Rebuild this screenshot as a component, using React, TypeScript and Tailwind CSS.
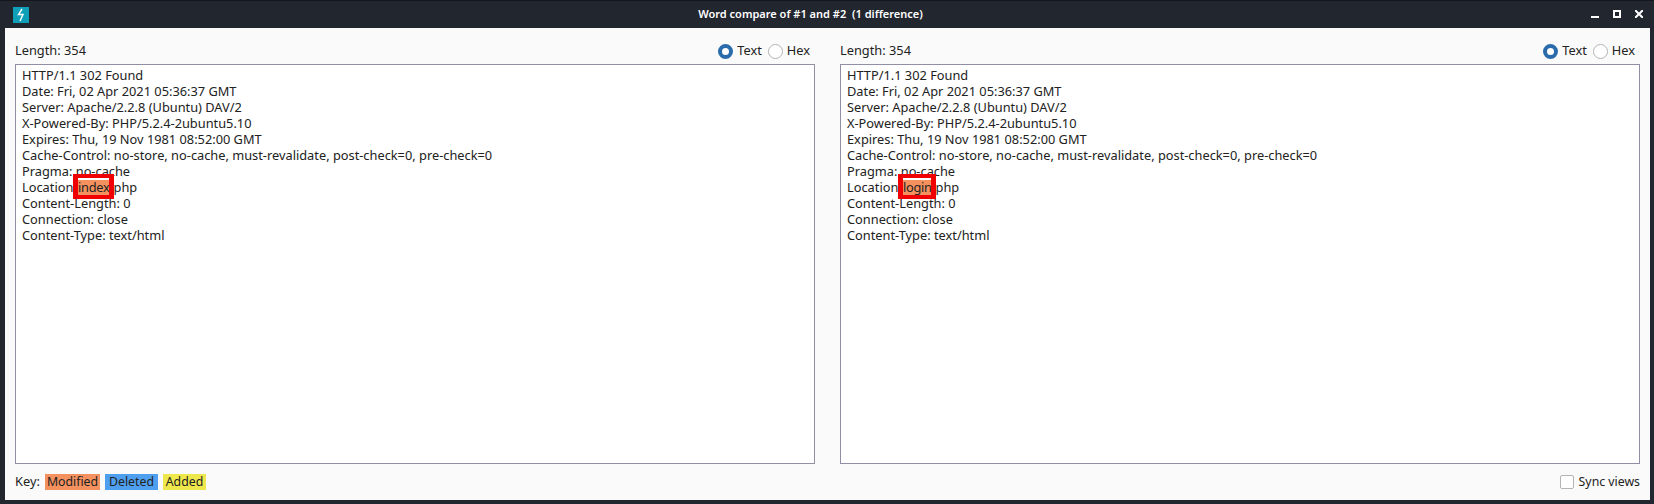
const lines = (word: string, width: string) => [
  "HTTP/1.1 302 Found",
  "Date: Fri, 02 Apr 2021 05:36:37 GMT",
  "Server: Apache/2.2.8 (Ubuntu) DAV/2",
  "X-Powered-By: PHP/5.2.4-2ubuntu5.10",
  "Expires: Thu, 19 Nov 1981 08:52:00 GMT",
  "Cache-Control: no-store, no-cache, must-revalidate, post-check=0, pre-check=0",
  "Pragma: no-cache",
  <>
    Location:{" "}
    <span className={`relative -ml-[2px] mt-[1px] inline-block h-[15px] bg-[#f4915f] align-top leading-[14px] tracking-[-0.3px] ${width}`}>
      {word}
      <span className="absolute -left-[5px] -right-[5px] -top-[6px] -bottom-[4px] border-x-[5px] border-y-[4px] border-[#f00000]" />
    </span>
    <span className="ml-[1px]">.php</span>
  </>,
  "Content-Length: 0",
  "Connection: close",
  "Content-Type: text/html",
];

function Radio({ label, checked }: { label: string; checked?: boolean }) {
  return (
    <div className="flex items-center gap-[4px]">
      {checked ? (
        <span className="h-[15px] w-[15px] rounded-full border-[4px] border-[#2a6cab] bg-white" />
      ) : (
        <span className="h-[15px] w-[15px] rounded-full border border-[#b4b4b4] bg-white" />
      )}
      <span>{label}</span>
    </div>
  );
}

function Pane({ word, width }: { word: string; width: string }) {
  return (
    <section className="flex w-[800px] flex-col">
      <div className="flex h-[36px] items-center justify-between pt-[10px] pr-[5px]">
        <span>Length: 354</span>
        <div className="flex items-center gap-[6px]">
          <Radio label="Text" checked />
          <Radio label="Hex" />
        </div>
      </div>
      <div className="h-[400px] border border-[#908fa4] bg-white px-[6px] pt-[2px] leading-[16px]">
        {lines(word, width).map((line, i) => (
          <div key={i} className="h-[16px] whitespace-pre">
            {line}
          </div>
        ))}
      </div>
    </section>
  );
}

function Swatch({ label, color }: { label: string; color: string }) {
  return <span className={`flex h-[16px] items-center justify-center text-[12.3px] ${color}`}>{label}</span>;
}

export default function App() {
  return (
    <div className="flex h-[504px] w-[1654px] flex-col overflow-hidden border-t border-[#14161b] bg-[#22262f] pl-[5px] pr-[4px] pb-[4px] font-['Noto_Sans',sans-serif] text-[12.8px] text-[#222222]">
      <header className="relative flex h-[27px] shrink-0 items-center justify-center pr-[34px] text-white">
        <span className="absolute left-[8px] top-[6px] flex h-[16px] w-[16px] items-center justify-center bg-[#0f9fb8]">
          <svg width="12" height="14" viewBox="0 0 12 14" fill="none" stroke="#ffffff" strokeWidth="1.4">
            <path d="M7 1 L3.5 6.5 L8 6.5 L5 13" />
          </svg>
        </span>
        <span className="text-[11px] font-semibold">Word compare of #1 and #2&nbsp; (1 difference)</span>
        <div className="absolute right-[7px] top-[9px] flex items-center gap-[14px]">
          <span className="mt-[6px] h-[2px] w-[8px] bg-white" />
          <span className="h-[8px] w-[8px] border-[2px] border-white" />
          <svg width="8" height="8" viewBox="0 0 8 8" stroke="#ffffff" strokeWidth="2">
            <path d="M0 0 L8 8 M8 0 L0 8" />
          </svg>
        </div>
      </header>
      <main className="flex min-h-0 flex-1 flex-col bg-[#fafafa] px-[10px]">
        <div className="flex justify-between">
          <Pane word="index" width="w-[31px]" />
          <Pane word="login" width="w-[28px]" />
        </div>
        <footer className="flex flex-1 items-center justify-between">
          <div className="flex items-center">
            <span className="w-[30px]">Key:</span>
            <span className="w-[55px]"><Swatch label="Modified" color="bg-[#f4915f]" /></span>
            <span className="w-[5px]" />
            <span className="w-[53px]"><Swatch label="Deleted" color="bg-[#4f9ff0]" /></span>
            <span className="w-[5px]" />
            <span className="w-[43px]"><Swatch label="Added" color="bg-[#efe84c]" /></span>
          </div>
          <div className="flex items-center gap-[5px]">
            <span className="h-[14px] w-[14px] rounded-[2px] border border-[#b4b4b4] bg-white" />
            <span className="text-[12.3px]">Sync views</span>
          </div>
        </footer>
      </main>
    </div>
  );
}
